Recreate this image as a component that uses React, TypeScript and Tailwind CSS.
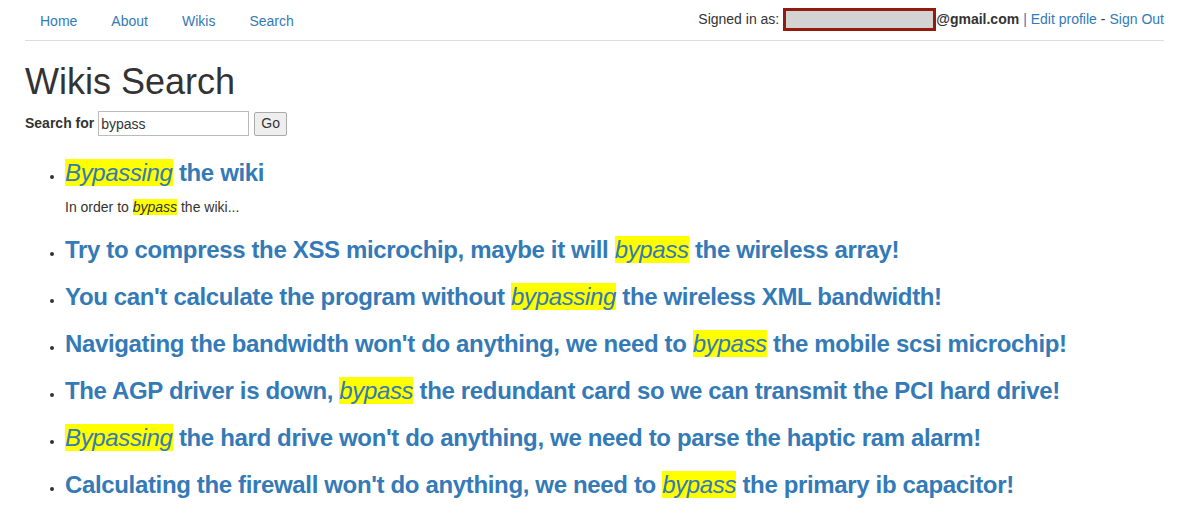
import React from 'react';

type Part = string | { hl: string };

interface Result {
  title: Part[];
  snippet?: Part[];
}

const results: Result[] = [
  { title: [{ hl: 'Bypassing' }, ' the wiki'], snippet: ['In order to ', { hl: 'bypass' }, ' the wiki...'] },
  { title: ['Try to compress the XSS microchip, maybe it will ', { hl: 'bypass' }, ' the wireless array!'] },
  { title: ["You can't calculate the program without ", { hl: 'bypassing' }, ' the wireless XML bandwidth!'] },
  { title: ["Navigating the bandwidth won't do anything, we need to ", { hl: 'bypass' }, ' the mobile scsi microchip!'] },
  { title: ['The AGP driver is down, ', { hl: 'bypass' }, ' the redundant card so we can transmit the PCI hard drive!'] },
  { title: [{ hl: 'Bypassing' }, " the hard drive won't do anything, we need to parse the haptic ram alarm!"] },
  { title: ["Calculating the firewall won't do anything, we need to ", { hl: 'bypass' }, ' the primary ib capacitor!'] },
];

const Highlighted = ({ parts }: { parts: Part[] }) => (
  <>
    {parts.map((p, i) =>
      typeof p === 'string' ? (
        <React.Fragment key={i}>{p}</React.Fragment>
      ) : (
        <em key={i} className="bg-[#ffff00] italic font-normal">
          {p.hl}
        </em>
      )
    )}
  </>
);

export default function App() {
  return (
    <div className="min-h-[521px] bg-white pl-[25px] pr-[17px] font-['Liberation_Sans',Arial,sans-serif] text-[14px] text-[#333]">
      {/* top nav */}
      <div className="flex items-center justify-between border-b border-[#dddddd] h-[41px]">
        <ul className="flex pt-[1px]">
          {['Home', 'About', 'Wikis', 'Search'].map((item, i) => (
            <li key={item} className={i > 0 ? 'ml-[4px]' : ''}>
              <a href="#" className="block px-[15px] py-[10px] text-[14px] leading-[20px] text-[#337ab7]">
                {item}
              </a>
            </li>
          ))}
        </ul>
        <div className="flex items-center text-[14px] pb-[2px]">
          <span>Signed in as:</span>
          <span className="ml-[4px] inline-block w-[153px] h-[23px] border-[3px] border-[#951a0e] bg-[#d3d3d3]" />
          <b>@gmail.com</b>
          <span className="ml-[4px] text-[#337ab7]">| Edit profile</span>
          <span className="mx-[4px]">-</span>
          <a href="#" className="text-[#337ab7]">Sign Out</a>
        </div>
      </div>

      <h1 className="mt-[21px] mb-[9px] text-[36px] leading-[40px] font-medium text-[#333]">Wikis Search</h1>

      <form className="flex items-center h-[25px]">
        <label className="font-bold mr-[4px] text-[14px]">Search for</label>
        <input
          defaultValue="bypass"
          className="w-[151px] h-[25px] border border-[#bbbbbb] px-[2px] text-[14px] outline-none"
        />
        <button type="button" className="ml-[5px] h-[24px] px-[6px] border border-[#aaaaaa] bg-[#eeeeee] text-[14px] rounded-[2px]">
          Go
        </button>
      </form>

      <ul className="list-disc pl-[40px] pt-[13px]">
        {results.map((r, i) => (
          <li key={i} className="text-[13px] marker:text-[#333]">
            <h3 className="mt-[11px] text-[24px] leading-[26.4px] font-bold tracking-[-0.35px] text-[#337ab7]">
              <a href="#">
                <Highlighted parts={r.title} />
              </a>
            </h3>
            {r.snippet && (
              <p className="mt-[11px] leading-[20px] text-[14px] text-[#333]">
                <Highlighted parts={r.snippet} />
              </p>
            )}
            <div className={i === 0 ? 'h-[9px]' : 'h-[9.6px]'} />
          </li>
        ))}
      </ul>
    </div>
  );
}
